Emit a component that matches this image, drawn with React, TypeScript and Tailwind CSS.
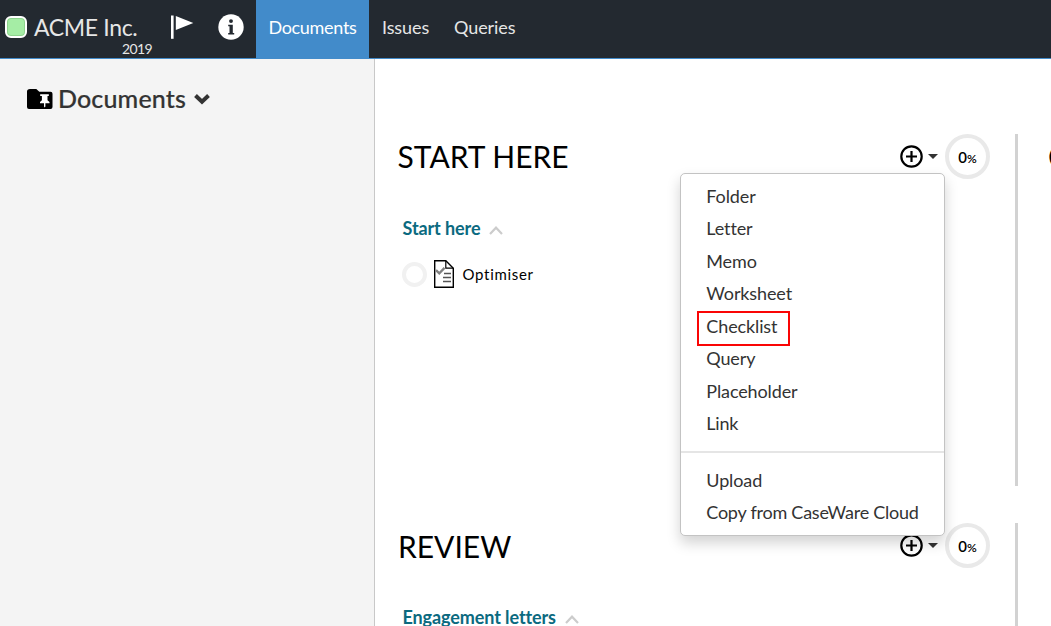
import React from "react";

const createItems = ["Folder", "Letter", "Memo", "Worksheet", "Checklist", "Query", "Placeholder", "Link"];
const importItems = ["Upload", "Copy from CaseWare Cloud"];

function FlagIcon() {
  return (
    <svg className="ml-[35px] mt-[15px] h-6 w-[23px] shrink-0" viewBox="0 0 23 24" fill="#fff">
      <path d="M0 .5h2.600v23.300H0z" />
      <path d="M4.800 1v14L22.300 8z" />
    </svg>
  );
}

function InfoIcon() {
  return (
    <svg className="ml-[24px] mt-[14px] size-[26px] shrink-0" viewBox="0 0 26 26">
      <circle cx="13" cy="13" r="12.700" fill="#fff" />
      <circle cx="13" cy="7.100" r="1.950" fill="#232930" />
      <path d="M10.200 10.700h4.600v8.200h1.400v1.500h-6v-1.500h1.300v-6.700h-1.300z" fill="#232930" />
    </svg>
  );
}

function PinnedFolderIcon() {
  return (
    <svg className="mt-[30px] h-5 w-[26px] shrink-0" viewBox="0 0 26 20">
      <path d="M3 0h6.300l3 2.700H23.500a2 2 0 0 1 2 2V18a2 2 0 0 1-2 2H2a2 2 0 0 1-2-2V2.500Q0 0 3 0z" fill="#000" />
      <path d="M13.200 5.300h8.600v1.700h-1.300v4.200l2 1.800v1.300h-4.100v3.200l-.7 1-.7-1v-3.200h-4V13l1.900-1.800V7h-1.700z" fill="#fff" />
    </svg>
  );
}

function ChecklistDocIcon() {
  return (
    <svg className="ml-[7px] h-7 w-5 shrink-0" viewBox="0 0 20 28" fill="none">
      <path d="M.7.7h11.100l7.500 7.500v19.100H.7z" stroke="#000" strokeWidth="1.400" fill="#fff" />
      <path d="M11.800.7v7.500h7.500" stroke="#000" strokeWidth="1.200" />
      <path d="M2 10.100l3.300 3.300 5.200-5.500" stroke="#808080" strokeWidth="2.300" />
      <path d="M10 13.500h7M9 17.500h8M9 21.500h8" stroke="#555" strokeWidth="1.300" />
    </svg>
  );
}

function Chevron() {
  return (
    <svg className="ml-[9px] mt-[3px] h-[9px] w-[14px] shrink-0" viewBox="0 0 14 9" fill="none">
      <path d="M1 8l6-6.300L13 8" stroke="#ccc" strokeWidth="2.200" />
    </svg>
  );
}

function SectionHeader({ title }: { title: string }) {
  return (
    <div className="flex h-[45px] items-center">
      <h2 className="-ml-[0.500px] grow text-[30px] leading-[45px] text-black">{title}</h2>
      <button className="flex items-center" aria-label="Add document">
        <svg className="size-[23px]" viewBox="0 0 23 23" fill="none" stroke="#000">
          <circle cx="11.500" cy="11.500" r="10.200" strokeWidth="2.200" />
          <path d="M11.500 6v11M6 11.500h11" strokeWidth="2.200" />
        </svg>
        <svg className="ml-[5px] h-[5px] w-[10px]" viewBox="0 0 10 5">
          <path d="M0 0h10L5 5z" fill="#333" />
        </svg>
      </button>
      <div className="ml-[7px] flex size-[45px] items-baseline justify-center rounded-full border-[4.500px] border-[#e9e9e9] pt-[9px] font-semibold leading-5 text-black">
        <span className="text-[15px]">0</span>
        <span className="text-[12px]">%</span>
      </div>
    </div>
  );
}

function MenuItem({ label }: { label: string }) {
  return (
    <li className="relative h-[32.430px] whitespace-nowrap pl-[25.300px] text-[18px] leading-[32.430px] tracking-[-0.120px] text-[#333] last:tracking-[-0.240px]">
      {label}
      {label === "Checklist" && (
        <span className="absolute left-4 top-[1.300px] h-[35px] w-[93px] border-2 border-[#fa0505]" />
      )}
    </li>
  );
}

function AddMenu() {
  return (
    <div className="absolute left-[282px] top-[39px] z-10 h-[363px] w-[265px] rounded-[5px] border border-[#c3c3c3] bg-white pt-[6px] shadow-[0_7px_14px_rgba(0,0,0,0.175)]">
      <ul>{createItems.map((item) => <MenuItem key={item} label={item} />)}</ul>
      <div className="mb-[10.500px] mt-[12px] h-0.5 bg-[#e5e5e5]" />
      <ul>{importItems.map((item) => <MenuItem key={item} label={item} />)}</ul>
    </div>
  );
}

function GroupTitle({ label }: { label: string }) {
  return (
    <div className="mt-[36px] flex h-[27px] items-center pl-[4.500px] text-[18px] font-bold text-[#0b6a80]">
      <span className="whitespace-nowrap tracking-[-0.100px]">{label}</span>
      <Chevron />
    </div>
  );
}

export default function App() {
  return (
    <div className="flex h-[626px] w-[1051px] flex-col overflow-hidden bg-white font-['Lato','Liberation_Sans',sans-serif]">
      <header className="flex h-[59px] shrink-0 border-b border-[#428bca] bg-[#232930] text-[#e6e6e6]">
        <div className="flex w-[256px] shrink-0">
          <div className="ml-[5px] mt-4 size-[22px] shrink-0 rounded-[6px] border-2 border-white bg-[#a5eda5] shadow-[inset_0_0_0_1px_#8ed38e]" />
          <div className="ml-[7px] flex w-[102px] shrink-0 flex-col">
            <span className="mt-[12px] whitespace-nowrap text-[23px] leading-[30px] tracking-[-0.350px]">ACME Inc.</span>
            <span className="-mr-[16px] text-right text-[14px] leading-[14px] tracking-[-0.600px]">2019</span>
          </div>
          <FlagIcon />
          <InfoIcon />
        </div>
        <nav className="flex text-[18px] leading-[54px] tracking-[-0.100px]">
          <a className="w-[113px] bg-[#428bca] text-center tracking-[-0.300px] text-white">Documents</a>
          <a className="ml-[13px]">Issues</a>
          <a className="ml-[25px]">Queries</a>
        </nav>
      </header>
      <div className="flex min-h-0 grow">
        <aside className="flex w-[375px] shrink-0 border-r border-[#c8c8c8] bg-[#f4f4f4] pl-[27px] text-[#333]">
          <PinnedFolderIcon />
          <h1 className="ml-[5px] mt-[21px] w-[129px] whitespace-nowrap text-[25px] font-medium leading-9 tracking-[0.150px] [-webkit-text-stroke:0.200px_#333]">Documents</h1>
          <svg className="ml-[7px] mt-[34px] h-[12px] w-[16px]" viewBox="0 0 16 12" fill="none">
            <path d="M1.500 2.500L8 8.700l6.500-6.200" stroke="#333" strokeWidth="4" />
          </svg>
        </aside>
        <main className="flex min-w-0 grow overflow-hidden pl-[23px] pt-[75px]">
          <div className="flex w-[620px] shrink-0 flex-col gap-[37px]">
            <section className="relative h-[352px] shrink-0 border-r-[3px] border-[#d2d2d2] pr-[25px]">
              <SectionHeader title="START HERE" />
              <AddMenu />
              <GroupTitle label="Start here" />
              <div className="mt-[18px] flex items-center pl-1">
                <span className="size-[25px] rounded-full border-4 border-[#f1f1f1]" />
                <ChecklistDocIcon />
                <span className="ml-[8.500px] text-[15px] tracking-[0.700px] text-black">Optimiser</span>
              </div>
            </section>
            <section className="h-[352px] shrink-0 border-r-[3px] border-[#d2d2d2] pr-[25px] [&_h2]:ml-0 [&_h2]:pt-0.5">
              <SectionHeader title="REVIEW" />
              <GroupTitle label="Engagement letters" />
            </section>
          </div>
          <h2 className="ml-[30px] shrink-0 text-[30px] leading-[45px] text-black">C</h2>
        </main>
      </div>
    </div>
  );
}
